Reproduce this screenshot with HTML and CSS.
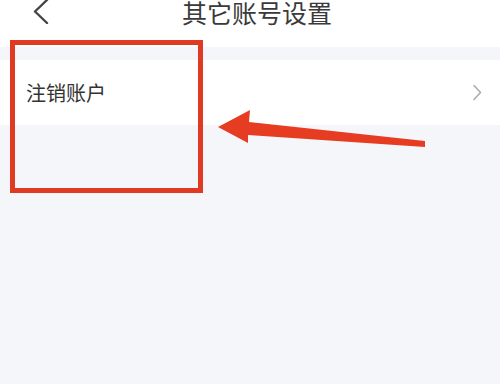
FILE: index.html
```html
<!DOCTYPE html>
<html lang="zh">
<head>
<meta charset="utf-8">
<link rel="stylesheet" href="styles.css">
</head>
<body>
<div class="page">
  <header class="navbar">
    <div class="navbar-inner">
      <svg class="back" width="16" height="24" viewBox="0 0 16 24">
        <polyline points="14,0 2,11.5 14,23" fill="none" stroke="#444" stroke-width="2.4" stroke-linecap="round" stroke-linejoin="round"/>
      </svg>
      <h1 class="title">其它账号设置</h1>
    </div>
  </header>
  <div class="gap"></div>
  <div class="list">
    <div class="row">
      <span class="row-label">注销账户</span>
      <svg class="row-arrow" width="10" height="18" viewBox="0 0 10 18">
        <polyline points="2,1.5 8.5,8.5 2,15.5" fill="none" stroke="#adadad" stroke-width="1.6" stroke-linecap="round" stroke-linejoin="round"/>
      </svg>
    </div>
  </div>
  <div class="highlight-box"></div>
  <svg class="pointer" width="500" height="384" viewBox="0 0 500 384">
    <polygon points="218,127 250,110 249,122 425,141 425,147 248,135 248,143" fill="#e63d22"/>
  </svg>
</div>
</body>
</html>
```

FILE: styles.css
```css
* { box-sizing: border-box; }
html, body {
  margin: 0;
  padding: 0;
}
body {
  width: 500px;
  height: 384px;
  overflow: hidden;
  background: #f5f6fa;
  font-family: "Noto Sans CJK SC", "Noto Sans", sans-serif;
}
.page {
  position: relative;
  width: 500px;
  height: 384px;
}
.navbar {
  height: 47px;
  background: #ffffff;
}
.navbar-inner {
  height: 24px;
  display: flex;
  align-items: flex-start;
  position: relative;
}
.back {
  margin-left: 33px;
  flex: none;
}
.title {
  position: absolute;
  left: 0;
  right: 0;
  top: 0;
  margin: 0;
  text-align: center;
  font-size: 25px;
  font-weight: 400;
  line-height: 24px;
  color: #3a3a3a;
  padding-left: 14px;
}
.gap {
  height: 13px;
}
.list {
  background: #ffffff;
}
.row {
  height: 65px;
  display: flex;
  align-items: center;
  justify-content: space-between;
  padding: 0 18px 0 26px;
}
.row-label {
  font-size: 20px;
  color: #333333;
  line-height: 1;
}
.row-arrow {
  flex: none;
}
.highlight-box {
  position: absolute;
  left: 10px;
  top: 40px;
  width: 193px;
  height: 153px;
  border: 5px solid #e03b22;
}
.pointer {
  position: absolute;
  left: 0;
  top: 0;
}
```
